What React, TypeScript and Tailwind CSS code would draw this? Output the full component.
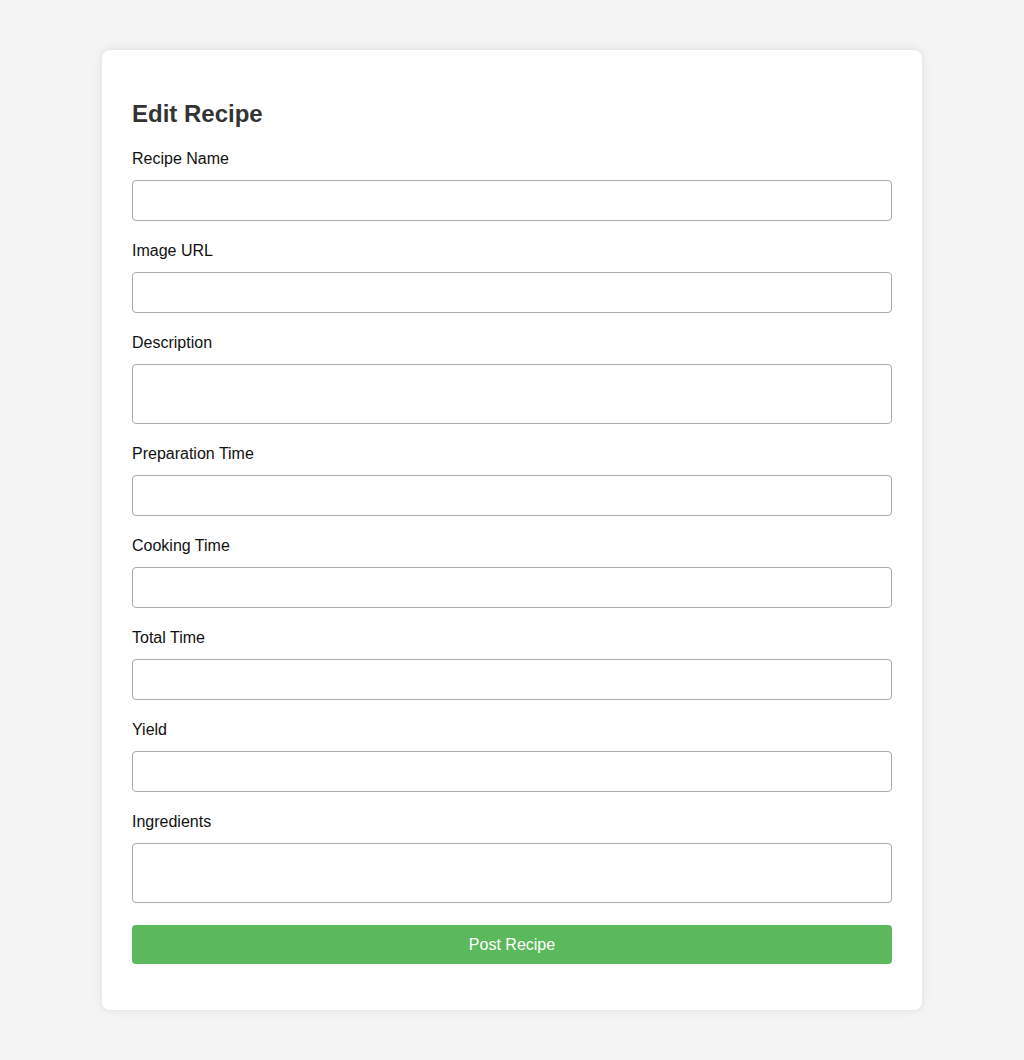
export default function App() {
  const fields: { label: string; area?: boolean }[] = [
    { label: "Recipe Name" },
    { label: "Image URL" },
    { label: "Description", area: true },
    { label: "Preparation Time" },
    { label: "Cooking Time" },
    { label: "Total Time" },
    { label: "Yield" },
    { label: "Ingredients", area: true },
  ];

  return (
    <div className="min-h-[1060px] bg-[#f4f4f4] py-[50px] font-['Liberation_Sans',Arial,sans-serif]">
      <div className="mx-auto w-[820px] rounded-lg bg-white px-[30px] pt-[50px] pb-[46px] shadow-[0_0_10px_rgba(0,0,0,0.1)]">
        <h2 className="text-[24px] leading-[28px] font-bold text-[#333] mb-[22px]">Edit Recipe</h2>

        {fields.map((f) => (
          <div key={f.label} className="mb-[21px]">
            <label className="block text-[16px] leading-[18px] text-[#111] mb-[12px]">{f.label}</label>
            {f.area ? (
              <textarea className="block w-full h-[60px] rounded border border-[#aaa] bg-white p-[10px] text-[16px] resize-none outline-none" />
            ) : (
              <input
                type="text"
                className="block w-full h-[41px] rounded border border-[#aaa] bg-white px-[10px] text-[16px] outline-none"
              />
            )}
          </div>
        ))}

        {/* margins collapse with the field above, so 22 here */}
        <button className="mt-[22px] block w-full h-[39px] rounded bg-[#5cb85c] text-white text-[16px]">
          Post Recipe
        </button>
      </div>
    </div>
  );
}
